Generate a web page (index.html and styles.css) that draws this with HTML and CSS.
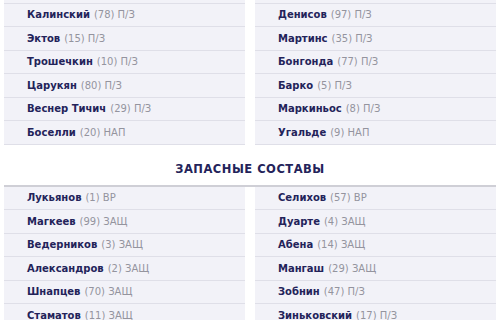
FILE: index.html
```html
<!DOCTYPE html>
<html lang="ru">
<head>
<meta charset="utf-8">
<link rel="stylesheet" href="styles.css">
</head>
<body>
<div class="page">
  <div class="lineup top">
    <ul class="col">
      <li class="row stub"></li>
      <li class="row"><b>Калинский</b> <span>(78) П/З</span></li>
      <li class="row"><b>Эктов</b> <span>(15) П/З</span></li>
      <li class="row"><b>Трошечкин</b> <span>(10) П/З</span></li>
      <li class="row"><b>Царукян</b> <span>(80) П/З</span></li>
      <li class="row"><b>Веснер Тичич</b> <span>(29) П/З</span></li>
      <li class="row"><b>Боселли</b> <span>(20) НАП</span></li>
    </ul>
    <ul class="col">
      <li class="row stub"></li>
      <li class="row"><b>Денисов</b> <span>(97) П/З</span></li>
      <li class="row"><b>Мартинс</b> <span>(35) П/З</span></li>
      <li class="row"><b>Бонгонда</b> <span>(77) П/З</span></li>
      <li class="row"><b>Барко</b> <span>(5) П/З</span></li>
      <li class="row"><b>Маркиньос</b> <span>(8) П/З</span></li>
      <li class="row"><b>Угальде</b> <span>(9) НАП</span></li>
    </ul>
  </div>
  <h2 class="title">ЗАПАСНЫЕ СОСТАВЫ</h2>
  <div class="lineup subs">
    <ul class="col">
      <li class="row"><b>Лукьянов</b> <span>(1) ВР</span></li>
      <li class="row"><b>Магкеев</b> <span>(99) ЗАЩ</span></li>
      <li class="row"><b>Ведерников</b> <span>(3) ЗАЩ</span></li>
      <li class="row"><b>Александров</b> <span>(2) ЗАЩ</span></li>
      <li class="row"><b>Шнапцев</b> <span>(70) ЗАЩ</span></li>
      <li class="row"><b>Стаматов</b> <span>(11) ЗАЩ</span></li>
    </ul>
    <ul class="col">
      <li class="row"><b>Селихов</b> <span>(57) ВР</span></li>
      <li class="row"><b>Дуарте</b> <span>(4) ЗАЩ</span></li>
      <li class="row"><b>Абена</b> <span>(14) ЗАЩ</span></li>
      <li class="row"><b>Мангаш</b> <span>(29) ЗАЩ</span></li>
      <li class="row"><b>Зобнин</b> <span>(47) П/З</span></li>
      <li class="row"><b>Зиньковский</b> <span>(17) П/З</span></li>
    </ul>
  </div>
</div>
</body>
</html>
```
FILE: styles.css
```css
* { box-sizing: border-box; }
html, body { margin: 0; padding: 0; background: #fff; }
body { width: 500px; height: 320px; overflow: hidden; font-family: "DejaVu Sans", sans-serif; }
.page { padding: 0 4px; }
.lineup { display: grid; grid-template-columns: 241px 241px; column-gap: 10px; }
.col { list-style: none; margin: 0; padding: 0; }
.row {
  height: 23.5px;
  border-bottom: 1px solid #dfdfe8;
  background: #f2f2f8;
  padding-left: 23px;
  display: flex;
  align-items: center;
  font-size: 10px;
  white-space: nowrap;
}
.row.stub { height: 3.5px; padding: 0; }
.row b { color: #23235a; font-weight: 700; }
.row span { color: #94949e; margin-left: 4px; }
.title {
  margin: 0;
  height: 40px;
  padding-top: 17px;
  text-align: center;
  font-size: 11.5px;
  font-weight: 700;
  color: #23235a;
  letter-spacing: 0.5px;
}
.subs { border-top: 2px solid #cfcfd6; }
```
